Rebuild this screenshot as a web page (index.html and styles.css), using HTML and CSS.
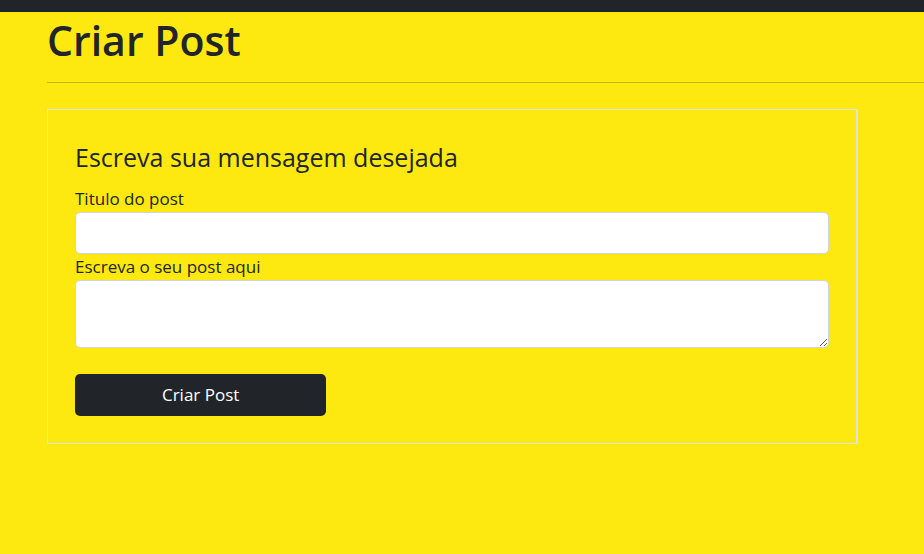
FILE: index.html
```html
<!DOCTYPE html>
<html lang="pt-BR">
<head>
<meta charset="utf-8">
<meta name="viewport" content="width=device-width, initial-scale=1">
<title>Criar Post</title>
<link rel="stylesheet" href="styles.css">
</head>
<body>
<header class="topbar"></header>
<main class="content">
  <h1 class="title">Criar Post</h1>
  <hr class="divider">
  <form class="card">
    <h2 class="card-title">Escreva sua mensagem desejada</h2>
    <label class="label" for="titulo">Titulo do post</label>
    <input class="field" id="titulo" type="text">
    <label class="label" for="post">Escreva o seu post aqui</label>
    <textarea class="field area" id="post" rows="2"></textarea>
    <button class="button" type="button">Criar Post</button>
  </form>
</main>
</body>
</html>
```
FILE: styles.css
```css
* {
  box-sizing: border-box;
}

body {
  margin: 0;
  min-height: 100vh;
  background: #fde910;
  color: #212529;
  font-family: "Segoe UI", "Open Sans", "Noto Sans", sans-serif;
  font-size: 17px;
  line-height: 26px;
}

.topbar {
  height: 12px;
  background: #212529;
}

.content {
  padding-left: 47px;
}

.title {
  margin: 0;
  font-size: 41px;
  font-weight: 600;
  line-height: 56px;
}

.divider {
  height: 1px;
  margin: 14px 0 26px;
  border: 0;
  background: #c7b715;
}

.card {
  width: calc(100% - 66px);
  padding: 32px 27px 27px;
  border: 1px solid #dee2e6;
  border-right-width: 2px;
}

.card-title {
  margin: 0 0 14px;
  font-size: 25px;
  font-weight: 400;
  line-height: 30px;
}

.label {
  display: block;
}

.field {
  display: block;
  width: 100%;
  height: 42px;
  padding: 7px 13px;
  border: 1px solid #ced4da;
  border-radius: 5px;
  background: #fff;
  color: inherit;
  font: inherit;
}

.area {
  height: 68px;
  resize: vertical;
}

.button {
  display: block;
  width: 33.3333%;
  height: 42px;
  margin-top: 26px;
  border: 0;
  border-radius: 5px;
  background: #212529;
  color: #fff;
  font: inherit;
}
```
